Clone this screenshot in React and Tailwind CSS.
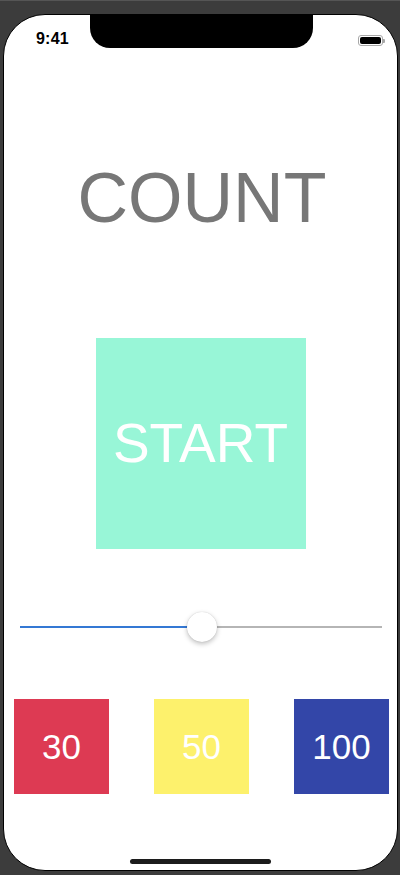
import React from "react";

export default function App() {
  return (
    <div className="w-[400px] h-[875px] bg-[#3c3c3c] border-t border-[#555] pt-[13px] pl-[3px] pr-[2px] pb-[4px]" style={{ fontFamily: '"Liberation Sans", Arial, sans-serif' }}>
      <div className="relative w-full h-full bg-white rounded-[42px] border border-black flex flex-col items-center overflow-hidden">
        {/* notch */}
        <div className="absolute top-[-1px] left-[86px] w-[223px] h-[34px] bg-black rounded-b-[20px]" />
        {/* status bar */}
        <div className="w-full h-[46px] relative">
          <div className="absolute left-[32px] top-[16px] text-[16px] leading-none font-bold text-black tracking-[0.2px]">9:41</div>
          <div className="absolute left-[354px] top-[20px] flex items-center">
            <div className="w-[25px] h-[11px] rounded-[3px] border border-[#a8a8a8] p-[1px]">
              <div className="w-full h-full bg-black rounded-[2px]" />
            </div>
            <div className="w-[2px] h-[4px] bg-[#a8a8a8] rounded-r-[1px]" />
          </div>
        </div>

        <div className="mt-[102px] h-[71px] leading-none text-[70px] text-[#777777] ml-[3px]">COUNT</div>

        <div className="mt-[104px] w-[210px] h-[211px] bg-[#98f6d7] flex items-center justify-center">
          <span className="text-[55px] leading-none text-white">START</span>
        </div>

        <div className="mt-[63px] w-[362px] h-[30px] relative flex items-center ml-[1px]">
          <div className="h-[2px] w-[181px] bg-[#3478d4]" />
          <div className="h-[2px] flex-1 bg-[#b5b5b5]" />
          <div className="absolute left-[167px] top-0 w-[30px] h-[30px] rounded-full bg-white shadow-[0_2px_5px_rgba(0,0,0,0.25),0_0_1px_rgba(0,0,0,0.2)]" />
        </div>

        <div className="mt-[57px] w-full flex justify-between pl-[10px] pr-[8px]">
          <div className="w-[95px] h-[95px] bg-[#dd3a53] flex items-center justify-center text-white text-[35px] leading-none">30</div>
          <div className="w-[95px] h-[95px] bg-[#fdf16c] flex items-center justify-center text-white text-[35px] leading-none">50</div>
          <div className="w-[95px] h-[95px] bg-[#3346a8] flex items-center justify-center text-white text-[35px] leading-none">100</div>
        </div>

        <div className="mt-[65px] w-[141px] h-[5px] rounded-full bg-[#1c1c1c]" />
      </div>
    </div>
  );
}
